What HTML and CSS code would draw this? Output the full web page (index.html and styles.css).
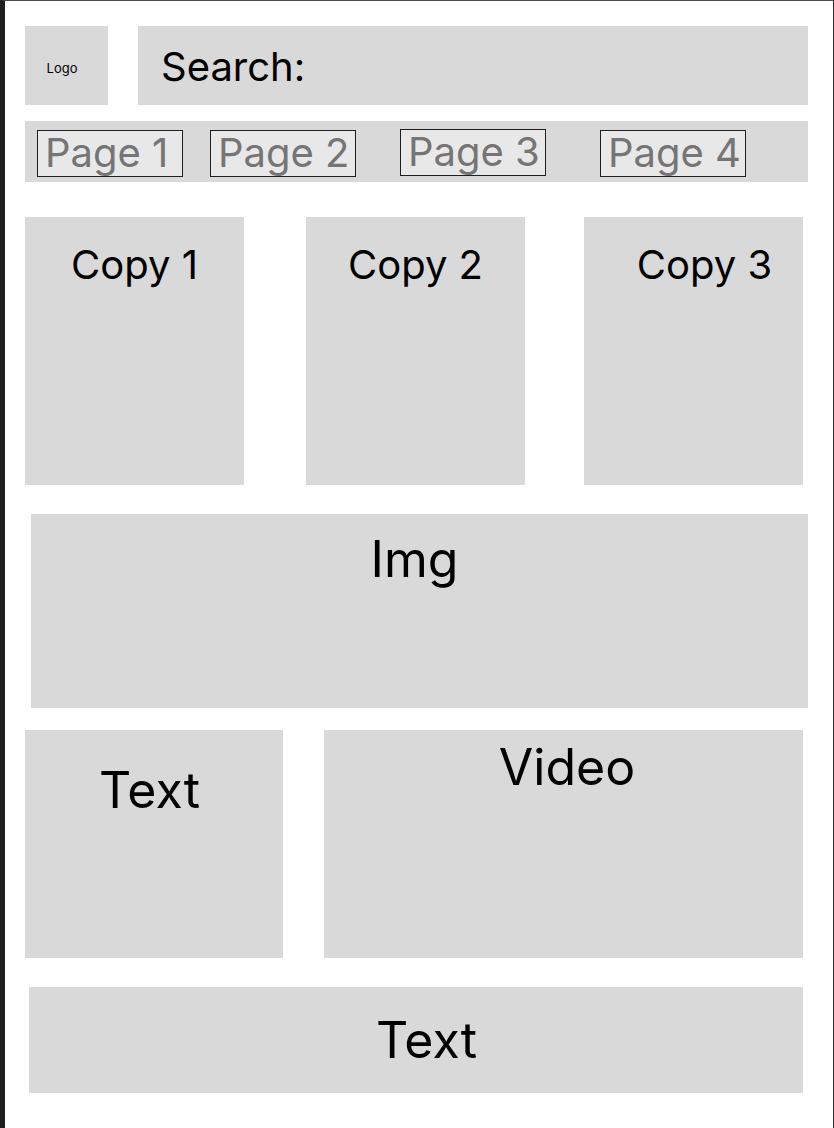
FILE: index.html
```html
<!DOCTYPE html>
<html>
	<head>
		<meta charset="UTF-8">
		<title>Wireframe</title>
		<link rel="stylesheet" href="styles.css">
	</head>
	<body>
		<div class="page">
			<header class="top">
				<div class="logo">Logo</div>
				<div class="search">Search:</div>
			</header>
			<nav class="pages">
				<span class="tab tab1">Page 1</span>
				<span class="tab tab2">Page 2</span>
				<span class="tab tab3">Page 3</span>
				<span class="tab tab4">Page 4</span>
			</nav>
			<section class="copies">
				<div class="copy">Copy 1</div>
				<div class="copy copy2">Copy 2</div>
				<div class="copy copy3">Copy 3</div>
			</section>
			<div class="img">Img</div>
			<section class="media">
				<div class="text">Text</div>
				<div class="video">Video</div>
			</section>
			<footer class="foot">Text</footer>
		</div>
	</body>
</html>
```

FILE: styles.css
```css
*{
	margin: 0;
	padding: 0;
	box-sizing: border-box;
}
html,body{
	width: 100%;
	height: 100%;
	background: #fff;
}
body{
	font-family: Inter, "Noto Sans", sans-serif;
	color: #000;
}
.page{
	width: 834px;
	height: 1128px;
	border-left: 5px solid #1e1e1e;
	border-top: 1px solid #4a4a4a;
	border-right: 1px solid #2a2a2a;
	display: flex;
	flex-direction: column;
}

/* header */
.top{
	display: flex;
	margin-top: 25px;
	height: 79px;
}
.logo{
	width: 83px;
	margin-left: 20px;
	background: #d9d9d9;
	font-size: 13px;
	display: flex;
	align-items: center;
	justify-content: center;
	padding: 4px 9px 0 0;
}
.search{
	width: 670px;
	margin-left: 30px;
	background: #d9d9d9;
	font-size: 40px;
	padding-left: 23px;
	line-height: 81px;
}

/* nav */
.pages{
	display: flex;
	align-items: flex-start;
	margin: 16px 0 0 20px;
	width: 783px;
	height: 61px;
	background: #d9d9d9;
	padding-top: 9px;
}
.tab{
	width: 146px;
	height: 47px;
	border: 1px solid #1e1e1e;
	background: #e8e8e8;
	color: #757575;
	font-size: 40px;
	line-height: 44px;
	padding-left: 7px;
	white-space: nowrap;
}
.tab1{ margin-left: 12px; }
.tab2{ margin-left: 27px; }
.tab3{ margin-left: 44px; margin-top: -1px; }
.tab4{ margin-left: 54px; }

/* copy cards */
.copies{
	display: flex;
	margin: 35px 0 0 20px;
	height: 268px;
}
.copy{
	width: 219px;
	background: #d9d9d9;
	font-size: 40px;
	text-align: center;
	padding-top: 23px;
}
.copy2{ margin-left: 62px; }
.copy3{ margin-left: 59px; padding-left: 22px; }

/* image */
.img{
	margin: 29px 0 0 26px;
	width: 777px;
	height: 194px;
	background: #d9d9d9;
	font-size: 50px;
	text-align: center;
	padding: 15px 10px 0 0;
}

/* text + video */
.media{
	display: flex;
	margin: 22px 0 0 20px;
	height: 228px;
}
.text{
	width: 258px;
	background: #d9d9d9;
	font-size: 50px;
	text-align: center;
	padding: 30px 9px 0 0;
}
.video{
	width: 479px;
	margin-left: 41px;
	background: #d9d9d9;
	font-size: 50px;
	text-align: center;
	padding: 7px 0 0 7px;
}

/* footer */
.foot{
	margin: 29px 0 0 24px;
	width: 774px;
	height: 106px;
	background: #d9d9d9;
	font-size: 50px;
	text-align: center;
	padding-top: 23px;
	padding-left: 21px;
}
```
